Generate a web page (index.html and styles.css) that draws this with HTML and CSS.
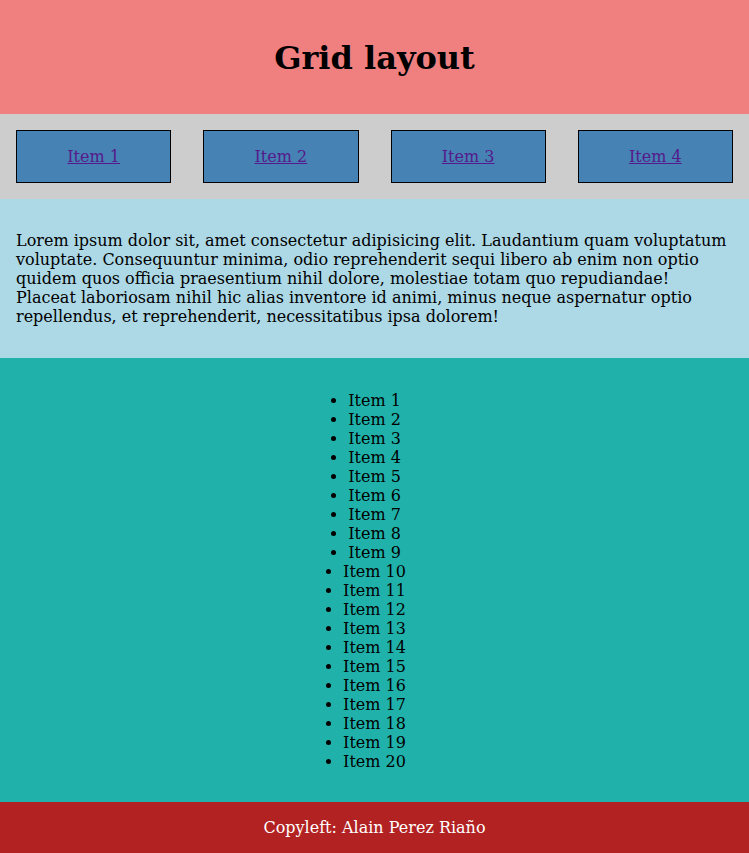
FILE: index.html
```html
<!DOCTYPE html>
<html lang="en">
<head>
<meta charset="utf-8">
<title>Grid layout</title>
<link rel="stylesheet" href="styles.css">
</head>
<body>
<div class="page">
  <header class="header"><h1 class="title">Grid layout</h1></header>
  <nav class="nav">
    <div class="nav-item"><a class="nav-link" href="#">Item 1</a></div>
    <div class="nav-item"><a class="nav-link" href="#">Item 2</a></div>
    <div class="nav-item"><a class="nav-link" href="#">Item 3</a></div>
    <div class="nav-item"><a class="nav-link" href="#">Item 4</a></div>
  </nav>
  <section class="intro">
    <p class="text">Lorem ipsum dolor sit, amet consectetur adipisicing elit. Laudantium quam voluptatum voluptate. Consequuntur minima, odio reprehenderit sequi libero ab enim non optio quidem quos officia praesentium nihil dolore, molestiae totam quo repudiandae! Placeat laboriosam nihil hic alias inventore id animi, minus neque aspernatur optio repellendus, et reprehenderit, necessitatibus ipsa dolorem!</p>
  </section>
  <section class="listing">
    <ul class="list">
      <li>Item 1</li><li>Item 2</li><li>Item 3</li><li>Item 4</li><li>Item 5</li>
      <li>Item 6</li><li>Item 7</li><li>Item 8</li><li>Item 9</li><li>Item 10</li>
      <li>Item 11</li><li>Item 12</li><li>Item 13</li><li>Item 14</li><li>Item 15</li>
      <li>Item 16</li><li>Item 17</li><li>Item 18</li><li>Item 19</li><li>Item 20</li>
    </ul>
  </section>
  <footer class="footer">Copyleft: Alain Perez Riaño</footer>
</div>
</body>
</html>
```
FILE: styles.css
```css
html, body {
  margin: 0;
  padding: 0;
}
body {
  font-family: "DejaVu Serif", serif;
  font-size: 16px;
  color: #000;
}
.page {
  display: grid;
}
.header {
  background: #f08080;
  padding: 16px;
  text-align: center;
}
.title {
  font-size: 32px;
  line-height: 38px;
  margin: 23px 0 21px;
}
.nav {
  background: #cdcdcd;
  padding: 16px;
  display: grid;
  grid-template-columns: repeat(4, 1fr);
  gap: 32px;
}
.nav-item {
  background: #4682b4;
  border: 1px solid #000;
  padding: 16px;
  text-align: center;
}
.nav-link {
  color: #551a8b;
}
.intro {
  background: #add8e6;
  padding: 16px;
}
.text {
  margin: 16px 0;
}
.listing {
  background: #20b2aa;
  padding: 16px;
}
.list {
  margin: 17px 0 15px;
  padding: 0;
  display: grid;
  justify-items: center;
}
.footer {
  background: #b22222;
  color: #fff;
  padding: 16px;
  text-align: center;
}
```
